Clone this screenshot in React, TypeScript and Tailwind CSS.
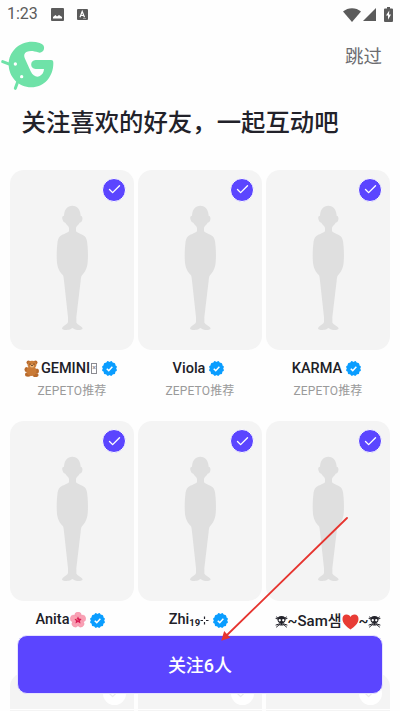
import type { ReactNode } from "react";
import { Check } from "lucide-react";

function TeddyIcon() {
  return (
    <svg className="mr-[2px] h-[17px] w-[15px] shrink-0" viewBox="0 0 30 34">
      <g fill="#b86a2c">
        <circle cx="9" cy="5" r="4" />
        <circle cx="23" cy="5" r="4" />
        <ellipse cx="5" cy="19" rx="4" ry="5" />
        <ellipse cx="26" cy="22" rx="4" ry="5" />
        <ellipse cx="8" cy="29" rx="6" ry="4.5" />
        <ellipse cx="23" cy="30" rx="6" ry="4" />
      </g>
      <ellipse cx="15" cy="22" rx="10" ry="10" fill="#c97a36" />
      <ellipse cx="16" cy="9.500" rx="9" ry="8" fill="#cc7f3b" />
      <ellipse cx="16" cy="12" rx="4" ry="3" fill="#edb87c" />
      <circle cx="12" cy="8" r="1.200" fill="#3b2417" />
      <circle cx="20" cy="8" r="1.200" fill="#3b2417" />
      <ellipse cx="16" cy="11" rx="1.800" ry="1.200" fill="#3b2417" />
    </svg>
  );
}

function FlowerIcon() {
  return (
    <svg className="ml-px h-4 w-4 shrink-0" viewBox="0 0 32 32">
      <g fill="#f9a0b4" stroke="#f086a0" strokeWidth=".6">
        <ellipse cx="16" cy="8" rx="7" ry="8" />
        <ellipse cx="16" cy="8" rx="7" ry="8" transform="rotate(72 16 16)" />
        <ellipse cx="16" cy="8" rx="7" ry="8" transform="rotate(144 16 16)" />
        <ellipse cx="16" cy="8" rx="7" ry="8" transform="rotate(216 16 16)" />
        <ellipse cx="16" cy="8" rx="7" ry="8" transform="rotate(288 16 16)" />
      </g>
      <path d="M16 9l2 4 5 1-3 4 1 5-5-3-5 3 1-5-3-4 5-1z" fill="#d81b55" />
      <path d="M16 17l-6-6" stroke="#ffb7a0" strokeWidth="1.600" />
    </svg>
  );
}

function HeartIcon() {
  return (
    <svg className="h-[16px] w-[17px] shrink-0" viewBox="0 0 34 32">
      <path d="M17 31C10 26 1 19 1 10 1 4 4 1 9 1c4 0 7 2 8 5 1-3 4-5 8-5 5 0 8 3 8 9 0 9-9 16-16 21z" fill="#e83c35" />
    </svg>
  );
}

function SkullIcon() {
  return (
    <svg className="h-[13px] w-[13px] shrink-0" viewBox="0 0 26 26">
      <g stroke="#22222a" strokeWidth="2" strokeLinecap="round">
        <path d="M3 4l4 3M2 7l4 1M23 4l-4 3M24 7l-4 1M3 24l6-5M23 24l-6-5M2 20l6-2M24 20l-6-2" />
      </g>
      <path d="M13 2c6 0 8 3 8 7 0 3-1 5-4 7v5H9v-5c-3-2-4-4-4-7 0-4 2-7 8-7z" fill="#22222a" />
      <circle cx="9.500" cy="10.500" r="2.300" fill="#fff" />
      <circle cx="16.500" cy="10.500" r="2.300" fill="#fff" />
      <path d="M11 17v2M15 17v2" stroke="#fff" strokeWidth="1" />
    </svg>
  );
}

function VerifiedIcon() {
  return (
    <svg className="h-[15px] w-[15px] shrink-0" viewBox="0 0 30 30">
      <g fill="#0a9dff">
        <rect x="3.500" y="3.500" width="23" height="23" rx="3" />
        <rect x="3.500" y="3.500" width="23" height="23" rx="3" transform="rotate(30 15 15)" />
        <rect x="3.500" y="3.500" width="23" height="23" rx="3" transform="rotate(60 15 15)" />
      </g>
      <path d="M9.500 15.500l4 3.800 7.200-7.600" fill="none" stroke="#fff" strokeWidth="3" />
    </svg>
  );
}

function Silhouette() {
  return (
    <svg className="mt-[30px] ml-[6px] h-[135px] w-[50px]" viewBox="0 0 150 405">
      <path
        d="M67 17C52 17 43 28 42 47C36 47 35 55 39 62C41 67 44 66 46 68C49 74 57 78 57 84V93C55 99 40 101 31 108C24 114 23 122 22 132C20 148 19 178 22 195C25 210 31 218 39 226C41 230 41 235 42 242L54 352V366C52 374 37 378 36 386C39 391 57 390 61 388L67 384L74 388C79 391 95 391 98 386C97 379 81 375 79 367V352L92 242C93 234 93 230 96 226C103 218 109 210 112 195C115 178 114 148 112 132C111 122 110 114 103 108C94 101 80 99 78 93V84C78 78 86 74 89 68C91 66 94 67 96 62C99 55 97 47 92 47C91 28 82 17 67 17Z"
        fill="#dfdfdf"
      />
    </svg>
  );
}

function Logo() {
  return (
    <svg className="h-[60px] w-[60px]" viewBox="0 105 180 180">
      <path
        d="M119 129C129 132 134 138 132 147C130 155 123 160 114 157C103 153 91 151 81 155C72 159 71 166 75 176L92 214C99 228 109 233 118 229C126 225 132 217 132 207H107C89 207 89 180 107 180H153C159 180 160 183 160 190C160 231 132 262 94 262C55 262 26 231 26 193C26 148 71 114 119 129Z"
        fill="#6fe2a8"
      />
      <path d="M8 185l22 8M46 265l8-22" stroke="#6fe2a8" strokeWidth="9" strokeLinecap="round" />
      <circle cx="46" cy="192" r="5" fill="#fff" />
      <circle cx="65" cy="230" r="5" fill="#fff" />
    </svg>
  );
}

const friends: { id: string; name: ReactNode; verified: boolean }[] = [
  {
    id: "gemini",
    name: (
      <>
        <TeddyIcon />
        <span>GEMINI</span>
        <span className="mr-px ml-px h-[11px] w-[6px] border border-[#8b8b91] text-center text-[7px] leading-[9px] text-[#8b8b91]">×</span>
      </>
    ),
    verified: true,
  },
  { id: "viola", name: "Viola", verified: true },
  { id: "karma", name: "KARMA", verified: true },
  { id: "anita", name: <>Anita<FlowerIcon /></>, verified: true },
  {
    id: "zhi",
    name: (
      <>
        Zhi<span className="mt-[7px] text-[9.500px] font-bold">19</span>
        <svg className="h-[9px] w-[9px]" viewBox="0 0 9 9">
          <path d="M4.500 .5v2.500M4.500 6v2.500M.5 4.500H3M6 4.500h2.500" stroke="#22222a" strokeWidth="1.200" />
        </svg>
      </>
    ),
    verified: true,
  },
  {
    id: "sam",
    name: <span className="mt-[3px] ml-[3px] flex items-center text-[15px]"><SkullIcon />~Sam샘<HeartIcon />~<SkullIcon /></span>,
    verified: false,
  },
];

function FriendCard({ name, verified }: { name: ReactNode; verified: boolean }) {
  return (
    <div className="h-[251.500px]">
      <div className="relative flex h-[180px] justify-center rounded-[14px] bg-[#f4f4f4]">
        <Silhouette />
        <span className="absolute top-[8px] right-[8px] flex h-[24px] w-[24px] items-center justify-center rounded-full border border-white bg-[#5b45ff]">
          <Check size={15} strokeWidth={2.2} className="text-white" />
        </span>
      </div>
      <div className="mt-[8px] flex h-[22px] items-center justify-center gap-1 pr-[3px] text-[14.500px] font-medium whitespace-nowrap text-[#202027]">
        <span className="flex items-center">{name}</span>
        {verified && <VerifiedIcon />}
      </div>
      <p className="mt-px text-center text-[12px] leading-[20px] tracking-[0.15px] text-[#9a9a9a]">ZEPETO推荐</p>
    </div>
  );
}

export default function App() {
  return (
    <div className="relative h-[711px] w-[400px] overflow-hidden bg-[#fefefe] font-['Roboto','Noto_Sans_CJK_SC',sans-serif]">
      {/* Status bar */}
      <div className="flex h-[28px] items-center pl-[7px] text-[#5b5b5b]">
        <span className="w-[44px] text-[16px] leading-none">1:23</span>
        <svg className="h-[13px] w-[13px]" viewBox="0 0 13 13">
          <rect width="13" height="13" rx="1" fill="currentColor" />
          <path d="M2 10.500V9l2.500-2L6 8.500 8 7l3 2v1.500z" fill="#fff" />
        </svg>
        <svg className="ml-[13px] h-[11px] w-[11px]" viewBox="0 0 11 11">
          <rect width="11" height="11" rx="1" fill="currentColor" />
          <path d="M3 8.200L5.200 2.500 7.500 8.200M3.800 6.500h3" fill="none" stroke="#fff" strokeWidth="1.200" />
          <path d="M6 9.500h3" stroke="#aaa" strokeWidth=".8" />
        </svg>
        <div className="ml-auto flex items-center pt-px pr-[7px]">
          <svg className="h-[14px] w-[18px]" viewBox="0 0 18 14">
            <path d="M0 3.500C5-1 13-1 18 3.500L9 14z" fill="currentColor" />
          </svg>
          <svg className="ml-[2px] h-[13px] w-[13px]" viewBox="0 0 13 13">
            <path d="M13 0v13H0z" fill="currentColor" />
          </svg>
          <svg className="ml-[8px] h-[15px] w-[9px]" viewBox="0 0 9 15">
            <path d="M3 0h3v1.500h2q1 0 1 1V14q0 1-1 1H1q-1 0-1-1V2.500q0-1 1-1h2z" fill="currentColor" />
            <path d="M5.300 3.500L2 8.600h2v4.200l3-5.300H5z" fill="#fff" />
          </svg>
        </div>
      </div>

      {/* Header */}
      <header className="flex h-[67px] justify-between pt-[7px] pr-[18px]">
        <Logo />
        <span className="pt-[8px] text-[18.500px] leading-[28px] text-[#6c6c70]">跳过</span>
      </header>
      <h1 className="h-[74px] pt-[11px] pl-[21.500px] text-[24.400px] leading-[34px] font-medium whitespace-nowrap text-[#22222a]">
        关注喜欢的好友，一起互动吧
      </h1>

      {/* Friends */}
      <main className="grid grid-cols-3 gap-x-1 px-[10px] pt-[0.500px]">
        {friends.map((friend) => (
          <FriendCard key={friend.id} name={friend.name} verified={friend.verified} />
        ))}
        {[0, 1, 2].map((i) => (
          <div key={i} className="relative h-[39px] rounded-t-[14px] bg-[#f4f4f4]">
            <span className="absolute top-[9px] right-[8px] flex h-[23px] w-[23px] items-center justify-center rounded-full bg-white">
              <Check size={15} strokeWidth={2} className="text-[#ececec]" />
            </span>
            <span className="absolute top-[36px] left-0 h-px w-full bg-white" />
          </div>
        ))}
      </main>

      <button className="absolute top-[635px] left-[17px] h-[59px] w-[366px] rounded-[10px] border border-[#e6e3ff] bg-[#5b45ff] pt-[2px] text-[18px] font-medium text-white">
        关注6人
      </button>

      {/* Pointer to the follow button */}
      <svg className="pointer-events-none absolute top-[515px] left-[218px] h-[128px] w-[132px]" viewBox="0 0 132 128">
        <path d="M129 3L8 121" stroke="#e6342f" strokeWidth="1.800" strokeLinecap="round" />
        <path d="M4.500 124.500l2-7 4.500 4.800z" fill="#e6342f" stroke="#e6342f" strokeWidth="1.500" />
      </svg>
    </div>
  );
}
